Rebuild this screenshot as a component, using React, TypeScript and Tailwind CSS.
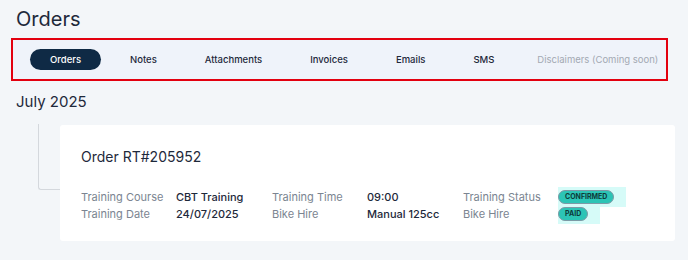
import React from 'react';

const tabs = ['Orders', 'Notes', 'Attachments', 'Invoices', 'Emails', 'SMS'];

function Badge({ label }: { label: string }) {
  return (
    <span className="inline-flex bg-[#d6fbf8] py-[3px] pr-[12px]">
      <span className="rounded-full border border-[#7d9aa6] bg-[#2cc4b5] px-[6px] py-[1px] text-[7px] font-bold leading-[10px] text-[#0d3b3a]">
        {label}
      </span>
    </span>
  );
}

export default function App() {
  const rows = [
    ['Training Course', 'CBT Training', 'Training Time', '09:00', 'Training Status', 'CONFIRMED'],
    ['Training Date', '24/07/2025', 'Bike Hire', 'Manual 125cc', 'Bike Hire', 'PAID'],
  ];

  return (
    <div
      className="h-[260px] w-[688px] overflow-hidden bg-[#f3f6f9] text-[#1e293b]"
      style={{ fontFamily: 'Inter, "Noto Sans", sans-serif' }}
    >
      <h1 className="px-4 pt-[7px] text-[20px] leading-[24px] font-normal">Orders</h1>

      {/* Tab bar */}
      <div className="mt-[7px] ml-[11px] w-[657px] border-2 border-[#e3000f] bg-[#eff3fa]">
        <div className="flex items-center gap-[10px] whitespace-nowrap py-[9px] pl-[17px]">
          {tabs.map((t, i) => (
            <span
              key={t}
              className={
                i === 0
                  ? 'rounded-full bg-[#0f2a45] px-[20px] py-[5px] text-[9.5px] leading-[11px] font-medium text-white'
                  : 'px-[19px] py-[5px] text-[9.5px] leading-[11px] font-medium text-[#1e293b]'
              }
            >
              {t}
            </span>
          ))}
          <span className="px-[14px] py-[5px] text-[9.5px] leading-[11px] text-[#a3a9b3]">
            Disclaimers (Coming soon)
          </span>
        </div>
      </div>

      <h2 className="mt-[12px] px-4 text-[15px] leading-[18px] font-normal">July 2025</h2>

      {/* Timeline + card */}
      <div className="mt-[14px] flex">
        <div className="ml-[38px] -mt-[1px] h-[66px] w-[22px] rounded-bl-[3px] border-b border-l border-[#d4d8dd]" />
        <div className="h-[116px] w-[615px] rounded-[3px] bg-white pl-[21px] pt-[23px]">
          <div className="text-[14px] leading-[17px]">Order RT#205952</div>
          <div className="mt-[25px] grid grid-cols-[95px_96px_95px_96px_95px_auto] gap-y-[3px] text-[11px] leading-[14px]">
            {rows.map((r) => (
              <React.Fragment key={r[0] + r[1]}>
                <span className="text-[#7b8591]">{r[0]}</span>
                <span className="font-medium text-[#1e293b]">{r[1]}</span>
                <span className="text-[#7b8591]">{r[2]}</span>
                <span className="font-medium text-[#1e293b]">{r[3]}</span>
                <span className="text-[#7b8591]">{r[4]}</span>
                <span className="-my-[3px]">
                  <Badge label={r[5]} />
                </span>
              </React.Fragment>
            ))}
          </div>
        </div>
      </div>
    </div>
  );
}
